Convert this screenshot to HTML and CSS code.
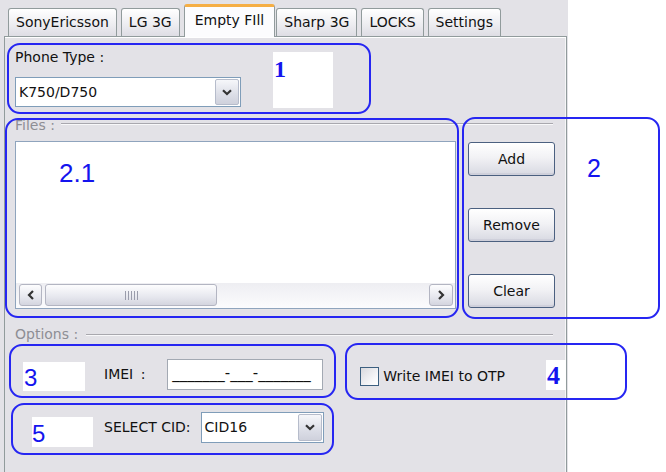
FILE: index.html
```html
<!DOCTYPE html>
<html lang="en">
<head>
  <meta charset="UTF-8">
  <meta name="viewport" content="width=device-width, initial-scale=1.0">
  <title>Empty FIll</title>
  <link rel="stylesheet" href="styles.css">
</head>
<body>
  <div class="window">
    <div class="tabs">
      <div class="tab">SonyEricsson</div>
      <div class="tab">LG 3G</div>
      <div class="tab active">Empty FIll</div>
      <div class="tab">Sharp 3G</div>
      <div class="tab">LOCKS</div>
      <div class="tab">Settings</div>
    </div>

    <div class="page">
      <div class="phone">
        <div class="field-label">Phone Type :</div>
        <div class="combo combo-phone">
          <span class="combo-text">K750/D750</span>
          <span class="drop">
            <svg width="10" height="7" viewBox="0 0 10 7"><path d="M1 1.2 L5 5 L9 1.2" fill="none" stroke="#333" stroke-width="2.2"/></svg>
          </span>
        </div>
      </div>

      <div class="group group-files">
        <div class="legend">
          <span>Files :</span>
          <span class="rule"></span>
        </div>
        <div class="files-body">
          <div class="listbox">
            <div class="list-area"></div>
            <div class="hscroll">
              <span class="sbtn">
                <svg width="8" height="10" viewBox="0 0 8 10"><path d="M6 1 L2 5 L6 9" fill="none" stroke="#333" stroke-width="2.2"/></svg>
              </span>
              <span class="thumb">
                <svg width="14" height="9" viewBox="0 0 14 9"><path d="M1.5 0V9M4.5 0V9M7.5 0V9M10.5 0V9M13.5 0V9" stroke="#9a9cab" stroke-width="1"/></svg>
              </span>
              <span class="sbtn sbtn-right">
                <svg width="8" height="10" viewBox="0 0 8 10"><path d="M2 1 L6 5 L2 9" fill="none" stroke="#333" stroke-width="2.2"/></svg>
              </span>
            </div>
          </div>
          <div class="buttons">
            <button class="btn">Add</button>
            <button class="btn">Remove</button>
            <button class="btn">Clear</button>
          </div>
        </div>
      </div>

      <div class="group group-options">
        <div class="legend">
          <span>Options :</span>
          <span class="rule rule-options"></span>
        </div>
        <div class="opt-rows">
          <div class="opt-row">
            <span class="imei-label">IMEI :</span>
            <div class="textbox">_______-___-_______</div>
            <label class="check">
              <span class="box"></span>
              <span>Write IMEI to OTP</span>
            </label>
          </div>
          <div class="opt-row">
            <span class="cid-label">SELECT CID:</span>
            <div class="combo combo-cid">
              <span class="combo-text">CID16</span>
              <span class="drop">
                <svg width="10" height="7" viewBox="0 0 10 7"><path d="M1 1.2 L5 5 L9 1.2" fill="none" stroke="#333" stroke-width="2.2"/></svg>
              </span>
            </div>
          </div>
        </div>
      </div>
    </div>
  </div>

  <!-- annotation callouts drawn over the dialog -->
  <div class="marks">
    <div class="mark mark-1"></div>
    <div class="mark mark-21"></div>
    <div class="mark mark-2"></div>
    <div class="mark mark-3"></div>
    <div class="mark mark-4"></div>
    <div class="mark mark-5"></div>

    <div class="patch patch-1"><span class="num num-serif">1</span></div>
    <div class="patch patch-3"><span class="num">3</span></div>
    <div class="patch patch-5"><span class="num">5</span></div>
    <div class="patch patch-4"><span class="num num-serif num-4">4</span></div>
    <span class="num num-21">2.1</span>
    <span class="num num-2">2</span>
  </div>
</body>
</html>
```

FILE: styles.css
```css
* {
  box-sizing: border-box;
}

body {
  margin: 0;
  background: #fff;
  font-family: "DejaVu Sans", Verdana, sans-serif;
  font-size: 14px;
  line-height: 17px;
  color: #111;
  position: relative;
}

.window {
  width: 568px;
  height: 472px;
  background: #e3e2e7;
  overflow: hidden;
}

/* tabs */

.tabs {
  display: flex;
  align-items: flex-end;
  gap: 4px;
  height: 36px;
  padding-left: 8px;
}

.tab {
  height: 28px;
  padding: 0 7px;
  border: 1px solid #919b9c;
  border-bottom: 0;
  border-radius: 3px 3px 0 0;
  background: linear-gradient(#ffffff, #ececf0 60%, #dedde4);
  display: flex;
  align-items: center;
  white-space: nowrap;
}

.tab.active {
  height: 33px;
  margin: 0 -3px -1px 0;
  padding: 0 10px 4px;
  position: relative;
  z-index: 1;
  background: #fcfcfe;
  border-top: 3px solid #f5ae45;
}

/* tab page */

.page {
  margin-left: 4px;
  width: 563px;
  height: 436px;
  border: 1px solid #919b9c;
  border-bottom: 0;
  background: #e3e2e7;
  box-shadow: inset 0 1px 0 #fff, inset -1px 0 0 #f6f6f8;
}

.phone {
  padding: 12px 0 0 10px;
}

.combo {
  display: flex;
  align-items: center;
  border: 1px solid #7f9db9;
  background: #fff;
}

.combo-phone {
  margin-top: 11px;
  width: 226px;
  height: 30px;
}

.combo-text {
  flex: 1;
  padding-left: 3px;
}

.drop {
  width: 24px;
  align-self: stretch;
  margin: 1px;
  border: 1px solid #b6bccb;
  border-radius: 2px;
  background: linear-gradient(#f6f7fa, #dcdee7 60%, #cfd1dc);
  display: flex;
  align-items: center;
  justify-content: center;
}

/* group boxes */

.group {
  margin-top: 10px;
}

.group-options {
  margin-top: 17px;
}

.legend {
  display: flex;
  align-items: flex-start;
  padding: 0 13px 0 10px;
  color: #8e8e94;
}

.rule {
  flex: 1;
  margin: 6px 0 0 6px;
  border-top: 1px solid #a9a8ae;
  border-bottom: 1px solid #f8f8fa;
}

.rule-options {
  margin: 8px 0 0 8px;
}

.files-body {
  display: flex;
  align-items: flex-start;
  gap: 12px;
  margin-top: 7px;
  padding-left: 10px;
}

.listbox {
  width: 441px;
  height: 168px;
  border: 1px solid #8fa4bd;
  background: #fff;
  display: flex;
  flex-direction: column;
}

.list-area {
  flex: 1;
}

.hscroll {
  display: flex;
  height: 25px;
  padding: 1px 2px 2px 3px;
  background: linear-gradient(#eeeef2, #fbfbfd);
}

.sbtn,
.thumb {
  height: 22px;
  border: 1px solid #b3b5c2;
  border-radius: 3px;
  background: linear-gradient(#fdfdfe, #e6e7ee 60%, #d4d5df);
  display: flex;
  align-items: center;
  justify-content: center;
}

.sbtn {
  width: 23px;
}

.sbtn-right {
  width: 24px;
  margin-left: auto;
}

.thumb {
  width: 172px;
  margin-left: 3px;
}

.buttons {
  display: flex;
  flex-direction: column;
  gap: 32px;
  margin-top: 1px;
}

.btn {
  width: 87px;
  height: 34px;
  padding: 0;
  border: 1px solid #4b6080;
  border-radius: 3px;
  background: linear-gradient(#ffffff, #f2f2f5 45%, #d8d9e2);
  box-shadow: inset 0 -2px 0 #cfd0db;
  font: inherit;
  color: #111;
}

/* options */

.opt-rows {
  display: flex;
  flex-direction: column;
  gap: 22px;
  margin-top: 16px;
  padding-left: 99px;
}

.opt-row {
  display: flex;
  align-items: center;
  height: 31px;
}

.imei-label {
  margin-right: 22px;
  word-spacing: 3px;
}

.textbox {
  width: 156px;
  height: 31px;
  border: 1px solid #a3a9b3;
  background: #fff;
  padding: 5px 0 0 4px;
  font-size: 15px;
  white-space: nowrap;
  overflow: hidden;
}

.check {
  display: flex;
  align-items: center;
  gap: 4px;
  margin-left: 37px;
  margin-top: 4px;
}

.box {
  width: 19px;
  height: 19px;
  border: 1px solid #3c5f80;
  background: linear-gradient(135deg, #d9d9de, #f7f7f9 70%, #fff);
}

.cid-label {
  margin-right: 10px;
}

.combo-cid {
  width: 123px;
  height: 31px;
}

/* annotation callouts */

.marks {
  position: absolute;
  inset: 0;
  pointer-events: none;
}

.mark {
  position: absolute;
  border: 2px solid #2626f2;
  border-radius: 13px;
}

.mark-1 { left: 7px; top: 43px; width: 364px; height: 71px; }
.mark-21 { left: 5px; top: 118px; width: 454px; height: 200px; }
.mark-2 { left: 462px; top: 117px; width: 198px; height: 202px; }
.mark-3 { left: 9px; top: 344px; width: 327px; height: 54px; }
.mark-4 { left: 345px; top: 343px; width: 282px; height: 57px; }
.mark-5 { left: 11px; top: 403px; width: 323px; height: 52px; }

.patch {
  position: absolute;
  background: #fff;
}

.patch-1 { left: 273px; top: 52px; width: 60px; height: 56px; padding: 5px 0 0 1px; }
.patch-3 { left: 23px; top: 362px; width: 62px; height: 29px; padding: 4px 0 0 1px; }
.patch-5 { left: 32px; top: 417px; width: 61px; height: 30px; padding: 5px 0 0 0; }
.patch-4 { left: 546px; top: 360px; width: 20px; height: 30px; padding: 3px 0 0 1px; }

.num {
  display: block;
  font-family: "Liberation Sans", Arial, sans-serif;
  font-size: 24px;
  line-height: 24px;
  color: #1414ee;
}

.num-serif {
  font-family: "Liberation Serif", "Times New Roman", serif;
  font-weight: bold;
  font-size: 24px;
  line-height: 24px;
}

.num-4 {
  font-size: 26px;
  line-height: 26px;
}

.num-21 {
  position: absolute;
  left: 59px;
  top: 160px;
  font-size: 26px;
  line-height: 26px;
}

.num-2 {
  position: absolute;
  left: 587px;
  top: 156px;
  font-size: 25px;
  line-height: 25px;
}
```
